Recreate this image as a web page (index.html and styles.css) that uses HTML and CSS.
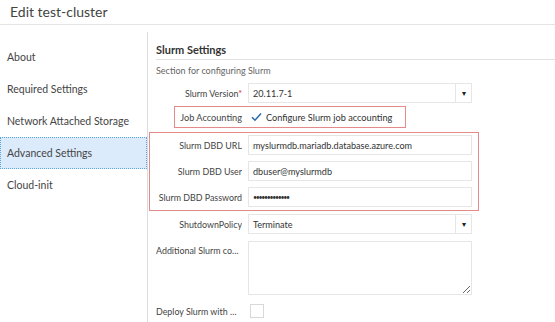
FILE: index.html
```html
<!DOCTYPE html>
<html lang="en">
<head>
    <meta charset="UTF-8">
    <title>Edit test-cluster</title>
    <link rel="stylesheet" href="styles.css">
</head>
<body>

<div class="page-title">Edit test-cluster</div>

<div class="editor">
    <div class="sidebar">
        <div class="nav-item">About</div>
        <div class="nav-item">Required Settings</div>
        <div class="nav-item">Network Attached Storage</div>
        <div class="nav-item selected">Advanced Settings</div>
        <div class="nav-item">Cloud-init</div>
    </div>

    <div class="main">
        <div class="section-title">Slurm Settings</div>
        <div class="section-desc">Section for configuring Slurm</div>

        <div class="form">
            <div class="row row-version">
                <label class="field-label">Slurm Version<span class="required">*</span></label>
                <div class="select">
                    <span class="select-value">20.11.7-1</span>
                    <span class="select-arrow">&#9662;</span>
                </div>
            </div>

            <div class="row row-job">
                <div class="highlight job-box">
                    <label class="job-label">Job Accounting</label>
                    <span class="check">
                        <svg width="11" height="10" viewBox="0 0 11 10"><path d="M1 5.2 L4 8.2 L10 1.5" fill="none" stroke="#2b6cb0" stroke-width="1.6"/></svg>
                    </span>
                    <span class="check-text">Configure Slurm job accounting</span>
                </div>
            </div>

            <div class="highlight dbd-box">
                <div class="row">
                    <label class="field-label">Slurm DBD URL</label>
                    <input class="text-input" type="text" value="myslurmdb.mariadb.database.azure.com">
                </div>
                <div class="row">
                    <label class="field-label">Slurm DBD User</label>
                    <input class="text-input" type="text" value="dbuser@myslurmdb">
                </div>
                <div class="row">
                    <label class="field-label">Slurm DBD Password</label>
                    <input class="text-input password" type="password" value="passwordvalue">
                </div>
            </div>

            <div class="row row-shutdown">
                <label class="field-label">ShutdownPolicy</label>
                <div class="select">
                    <span class="select-value">Terminate</span>
                    <span class="select-arrow">&#9662;</span>
                </div>
            </div>

            <div class="row row-config">
                <label class="field-label">Additional Slurm configuration</label>
                <textarea class="text-area"></textarea>
            </div>

            <div class="row row-deploy">
                <label class="field-label">Deploy Slurm with Cluster</label>
                <span class="empty-box"></span>
            </div>
        </div>
    </div>
</div>

</body>
</html>
```

FILE: styles.css
```css
body {
    margin: 0;
    font-family: Lato, 'Open Sans', sans-serif;
    font-size: 9px;
    color: #444;
    background: #fff;
}

.page-title {
    height: 24px;
    line-height: 24px;
    padding-left: 10px;
    font-size: 14px;
    color: #444;
    border-bottom: 1px solid #e4e4e4;
}

.editor {
    display: flex;
    margin-top: 7px;
    height: 290px;
}

.sidebar {
    width: 148px;
    border-right: 1px solid #dcdcdc;
    padding-top: 9px;
    box-sizing: border-box;
}

.nav-item {
    height: 32px;
    line-height: 32px;
    padding-left: 7px;
    font-size: 10.5px;
    color: #444;
    box-sizing: border-box;
}

.nav-item.selected {
    background: #dcebfb;
    border: 1px dotted #5aa6d8;
    line-height: 30px;
    padding-left: 6px;
}

.main {
    flex: 1;
    padding-left: 8px;
}

.section-title {
    font-weight: bold;
    font-size: 11px;
    color: #333;
    padding-top: 11px;
    height: 16px;
    border-bottom: 1px solid #e2e2e2;
}

.section-desc {
    margin-top: 5px;
    color: #666;
}

.form {
    display: flex;
    flex-direction: column;
    margin-top: 7px;
}

.row {
    display: flex;
    align-items: center;
}

.field-label {
    width: 86px;
    margin-right: 6px;
    text-align: right;
    white-space: nowrap;
    overflow: hidden;
    text-overflow: ellipsis;
    flex-shrink: 0;
    font-size: 8.9px;
}

.required {
    color: #d32f2f;
}

.select, .text-input {
    width: 224px;
    height: 20px;
    border: 1px solid #e6e6e6;
    box-sizing: border-box;
    font-family: inherit;
    font-size: 9.1px;
    color: #333;
}

.select {
    display: flex;
    align-items: center;
}

.select-value {
    flex: 1;
    padding-left: 4px;
}

.select-arrow {
    width: 15px;
    height: 18px;
    line-height: 18px;
    text-align: center;
    border-left: 1px solid #e6e6e6;
    font-size: 8px;
    color: #222;
}

.text-input {
    padding: 0 4px;
    outline: none;
}

.password {
    font-size: 7px;
    letter-spacing: -1.3px;
}

.highlight {
    border: 1px solid #e48a8a;
}

.row-job {
    margin-top: 3px;
}

.job-box {
    display: flex;
    align-items: center;
    margin-left: 18px;
    width: 232px;
    height: 22px;
    box-sizing: border-box;
    white-space: nowrap;
}

.job-label {
    width: 67px;
    text-align: right;
    flex-shrink: 0;
    font-size: 9.2px;
}

.check {
    width: 12px;
    display: flex;
    align-items: center;
    margin-left: 9px;
}

.check-text {
    margin-left: 3px;
    font-size: 9.2px;
    color: #333;
}

.dbd-box {
    margin-top: 4px;
    margin-left: -7px;
    width: 330px;
    padding: 2px 0 3px 6px;
    box-sizing: border-box;
    display: flex;
    flex-direction: column;
    gap: 6px;
}

.row-shutdown {
    margin-top: 3px;
}

.row-config {
    margin-top: 7px;
    align-items: flex-start;
}

.row-config .field-label {
    padding-top: 4px;
}

.text-area {
    width: 224px;
    height: 54px;
    border: 1px solid #e6e6e6;
    box-sizing: border-box;
    resize: vertical;
    margin: 0;
    outline: none;
}

.row-deploy {
    margin-top: 9px;
}

.empty-box {
    width: 12px;
    height: 12px;
    border: 1px solid #d8d8d8;
    margin-left: 2px;
}
```
